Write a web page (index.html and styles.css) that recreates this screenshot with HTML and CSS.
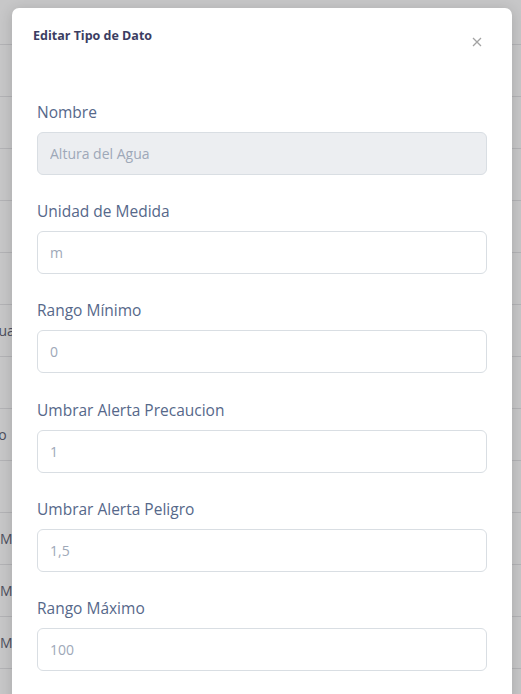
FILE: index.html
```html
<!DOCTYPE html>
<html lang="es">
<head>
<meta charset="utf-8">
<title>Editar Tipo de Dato</title>
<link rel="stylesheet" href="styles.css">
</head>
<body>
<div class="page">
  <div class="table">
    <div class="row"></div>
    <div class="row"></div>
    <div class="row"></div>
    <div class="row"></div>
    <div class="row"></div>
    <div class="row"><span class="cell shift-agua">Agua</span></div>
    <div class="row"></div>
    <div class="row"><span class="cell shift-rio">Río</span></div>
    <div class="row"></div>
    <div class="row"><span class="cell">M1</span></div>
    <div class="row"><span class="cell">M2</span></div>
    <div class="row"><span class="cell">M1</span></div>
    <div class="row"></div>
  </div>
</div>

<div class="modal">
  <div class="modal-header">
    <h5 class="modal-title">Editar Tipo de Dato</h5>
    <button class="close" type="button" aria-label="Cerrar">
      <svg width="10" height="10" viewBox="0 0 10 10"><path d="M1 1 L9 9 M9 1 L1 9" stroke="#a3a3a3" stroke-width="1.3" fill="none"/></svg>
    </button>
  </div>
  <form class="modal-body">
    <div class="group">
      <label class="label">Nombre</label>
      <input class="input" type="text" value="Altura del Agua" disabled>
    </div>
    <div class="group">
      <label class="label">Unidad de Medida</label>
      <input class="input" type="text" value="m">
    </div>
    <div class="group">
      <label class="label">Rango Mínimo</label>
      <input class="input" type="text" value="0">
    </div>
    <div class="group">
      <label class="label">Umbrar Alerta Precaucion</label>
      <input class="input" type="text" value="1">
    </div>
    <div class="group">
      <label class="label">Umbrar Alerta Peligro</label>
      <input class="input" type="text" value="1,5">
    </div>
    <div class="group">
      <label class="label">Rango Máximo</label>
      <input class="input" type="text" value="100">
    </div>
  </form>
</div>
</body>
</html>
```

FILE: styles.css
```css
* { box-sizing: border-box; }

html, body {
  margin: 0;
  height: 100%;
  overflow: hidden;
}

body {
  background: #c7c7c8;
  font-family: "Open Sans", "Noto Sans", sans-serif;
  position: relative;
}

.page {
  padding-top: 44px;
}

.table {
  border-top: 1px solid #b3b3b6;
}

.row {
  height: 52px;
  border-bottom: 1px solid #b3b3b6;
  display: flex;
  align-items: center;
  font-size: 14px;
  color: #4d4f5e;
  white-space: nowrap;
}

.cell { display: block; }
.shift-agua { margin-left: -18px; }
.shift-rio { margin-left: -14px; }

.modal {
  position: absolute;
  top: 8px;
  left: 12px;
  width: 500px;
  height: 720px;
  background: #fff;
  border-radius: 7px;
  box-shadow: 0 2px 14px rgba(0, 0, 0, 0.16);
}

.modal-header {
  display: flex;
  justify-content: space-between;
  align-items: flex-start;
  padding: 18px 30px 0 21px;
}

.modal-title {
  margin: 0;
  font-size: 12.5px;
  line-height: 20px;
  font-weight: 700;
  color: #3b3d62;
}

.close {
  border: 0;
  background: transparent;
  padding: 0;
  margin-top: 11px;
  width: 10px;
  height: 10px;
  display: flex;
}

.modal-body {
  padding: 54px 25px 0 25px;
}

.group {
  display: flex;
  flex-direction: column;
  margin-bottom: 25.2px;
}

.label {
  font-size: 15.5px;
  line-height: 22px;
  color: #56688a;
  margin-bottom: 9px;
}

.input {
  height: 43px;
  width: 100%;
  border: 1px solid #d9dee3;
  border-radius: 6px;
  padding: 0 12px;
  font-family: inherit;
  font-size: 14px;
  color: #9ea8b8;
  background: #fff;
  outline: none;
}

.input:disabled {
  background: #eceef1;
  color: #9ea8b8;
}
```
